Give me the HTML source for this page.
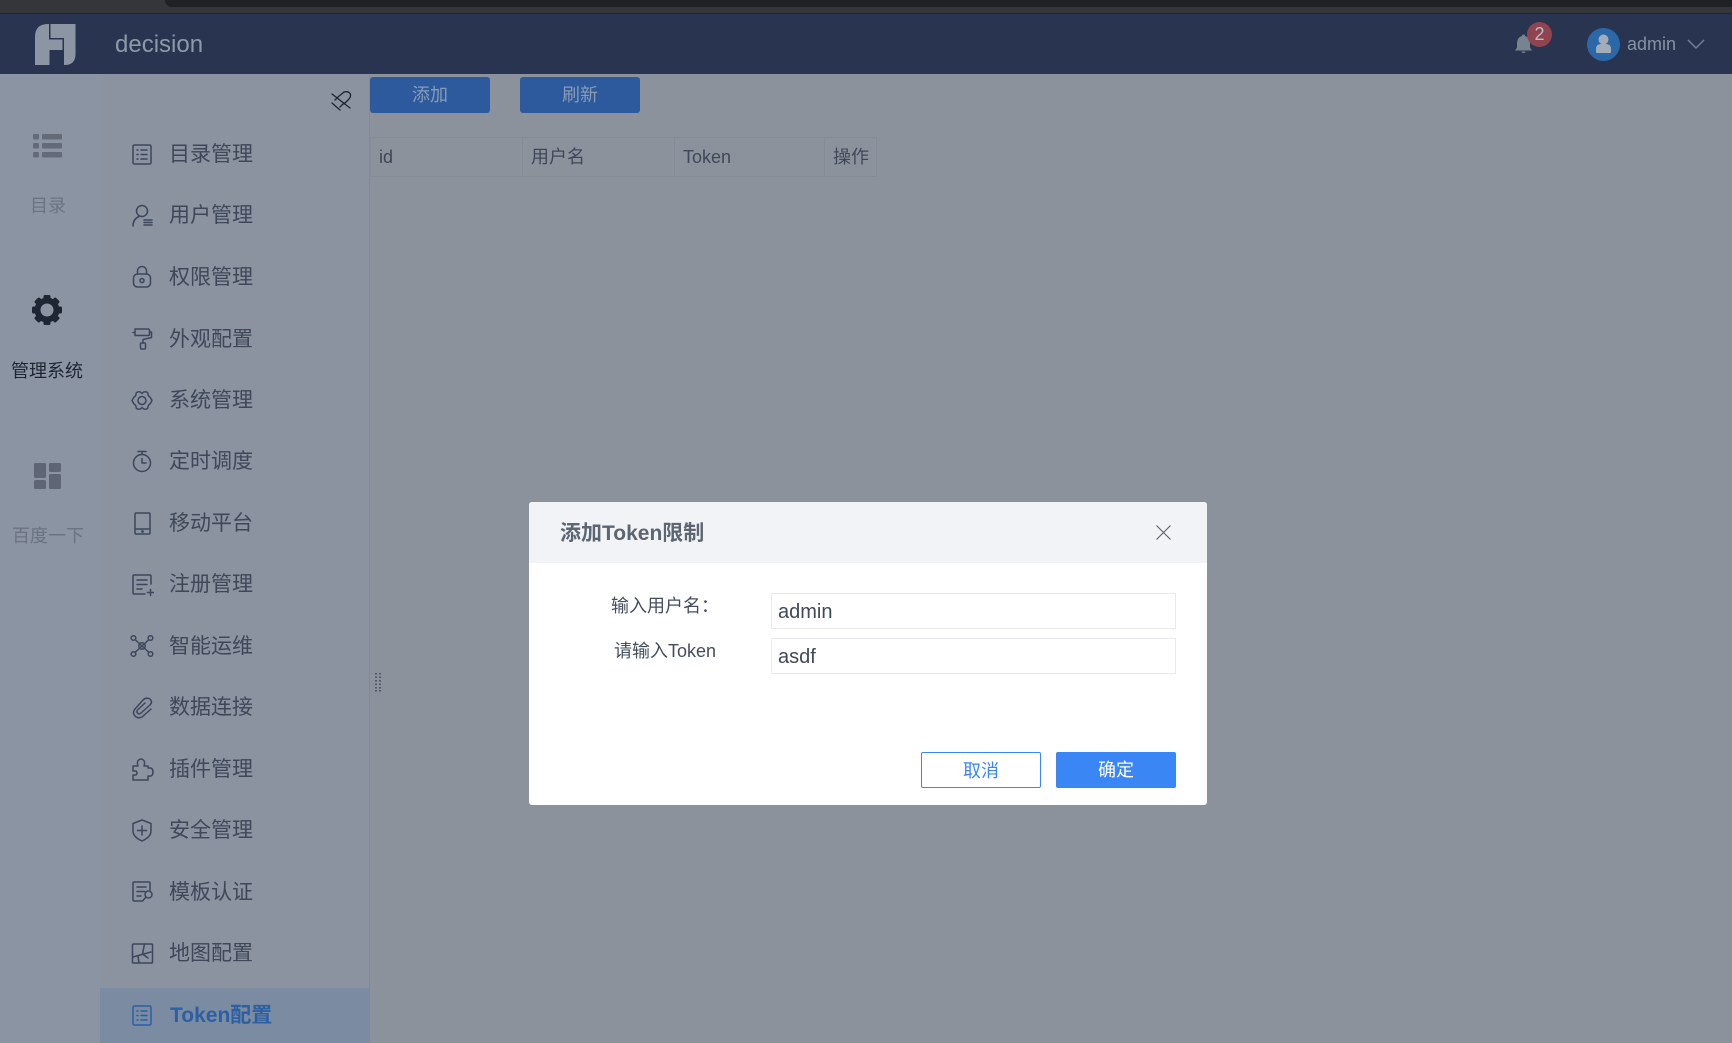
<!DOCTYPE html>
<html lang="zh">
<head>
<meta charset="utf-8">
<title>decision</title>
<style>
html,body{margin:0;padding:0;width:1732px;height:1043px;overflow:hidden;background:#8c929c}
body{position:relative;font-family:"Liberation Sans","Noto Sans CJK SC",sans-serif;}
.a{position:absolute;white-space:nowrap}
.nav{position:absolute;left:169px;font-size:21px;line-height:30px;color:#3e4859;white-space:nowrap}
.ic{position:absolute;left:130px;width:24px;height:26px;fill:none;stroke:#3c475c;stroke-width:1.5;stroke-linecap:round;stroke-linejoin:round}
.th{position:absolute;top:138px;height:38px;line-height:38px;font-size:18px;color:#3f4859;white-space:nowrap}
.vl{position:absolute;top:137px;width:1px;height:40px;background:#858c97}
</style>
</head>
<body>
<!-- browser strip -->
<div class="a" style="left:0;top:0;width:1732px;height:14px;background:#35363a"></div>
<div class="a" style="left:165px;top:0;width:1567px;height:7px;background:#202124;border-bottom-left-radius:7px"></div>
<div class="a" style="left:0;top:13px;width:1732px;height:1px;background:#222"></div>
<!-- header -->
<div class="a" style="left:0;top:14px;width:1732px;height:60px;background:#293550"></div>
<svg class="a" style="left:0;top:0" width="90" height="74"><path fill="#8c95a3" d="M35 65V37Q35 24 48 24H49V39.500H62.500V50H49.500V65ZM50.500 24H75.500V54Q75.500 65 64.500 65H64V38H50.500Z"/></svg>
<div class="a" style="left:115px;top:31px;font-size:24px;line-height:28px;color:#8c99a9">decision</div>
<svg class="a" style="left:1512px;top:32px" width="24" height="24"><path fill="#79828f" d="M10 4a1.500 1.500 0 0 1 3 0c3.500 1 5 4 5 7.500v4l2 3H3l2-3v-4c0-3.500 1.500-6.500 5-7.500zM9.500 19.500h4a2 1.500 0 0 1-4 0z"/></svg>
<div class="a" style="left:1527px;top:22px;width:25px;height:25px;border-radius:50%;background:#8f4450;color:#b9bec6;font-size:18px;line-height:25px;text-align:center">2</div>
<div class="a" style="left:1587px;top:28px;width:33px;height:33px;border-radius:50%;background:#2c68a8"></div>
<svg class="a" style="left:1587px;top:28px" width="33" height="33"><circle cx="16.500" cy="11.500" r="5" fill="#a3adb9"/><path fill="#a3adb9" d="M9 24v-3q0-5 5-5h5q5 0 5 5v3q0 1-1 1H10q-1 0-1-1z"/></svg>
<div class="a" style="left:1627px;top:33px;font-size:18px;line-height:22px;color:#8592a3">admin</div>
<svg class="a" style="left:1686px;top:37px" width="20" height="14"><path d="M2 3l8 8 8-8" fill="none" stroke="#758297" stroke-width="1.400"/></svg>

<!-- rail -->
<div class="a" style="left:0;top:74px;width:100px;height:969px;background:#8a94a3"></div>
<svg class="a" style="left:32px;top:132px" width="32" height="28" fill="#636b79"><rect x="1" y="2" width="6" height="5.500" rx="1"/><rect x="10" y="2" width="20" height="5.500" rx="1"/><rect x="1" y="11" width="6" height="5.500" rx="1"/><rect x="10" y="11" width="20" height="5.500" rx="1"/><rect x="1" y="20" width="6" height="5.500" rx="1"/><rect x="10" y="20" width="20" height="5.500" rx="1"/></svg>
<div class="a" style="left:0;width:96px;text-align:center;top:194px;font-size:18px;line-height:24px;color:#6b7382">目录</div>
<svg class="a" style="left:31px;top:294px" width="32" height="32" viewBox="0 0 32 32"><g fill="#1f2633"><circle cx="16" cy="16" r="12.500"/><rect x="12.500" y="1" width="7" height="30" rx="1.500"/><rect x="12.500" y="1" width="7" height="30" rx="1.500" transform="rotate(45 16 16)"/><rect x="12.500" y="1" width="7" height="30" rx="1.500" transform="rotate(90 16 16)"/><rect x="12.500" y="1" width="7" height="30" rx="1.500" transform="rotate(135 16 16)"/></g><circle cx="16" cy="16" r="6.500" fill="#8a94a3"/></svg>
<div class="a" style="left:-1px;width:96px;text-align:center;top:359px;font-size:18px;line-height:24px;color:#1f2633">管理系统</div>
<svg class="a" style="left:33px;top:462px" width="30" height="28" fill="#5e6675"><rect x="1" y="1" width="12" height="15" rx="1.500"/><rect x="16" y="1" width="12" height="9" rx="1.500"/><rect x="1" y="18" width="12" height="9" rx="1.500"/><rect x="16" y="12" width="12" height="15" rx="1.500"/></svg>
<div class="a" style="left:0;width:96px;text-align:center;top:524px;font-size:18px;line-height:24px;color:#6b7382">百度一下</div>

<!-- nav column -->
<div class="a" style="left:100px;top:74px;width:269px;height:969px;background:#8b92a0"></div>
<div class="a" style="left:369px;top:74px;width:1px;height:969px;background:#838a97"></div>
<div class="a" style="left:100px;top:988px;width:269px;height:55px;background:#7a8ba2"></div>
<svg class="a" style="left:328px;top:89px;fill:none;stroke:#1f2633;stroke-width:1.300;stroke-linejoin:round;stroke-linecap:round" width="24" height="24"><path d="M10 8L16 3Q20 2 22 4.500Q23.500 7 21 10L16 15M4 14L12 21M7 11L10 8M12 18L16 14M4 5L22 19"/></svg>

<svg class="ic" style="top:142px"><rect x="3" y="3" width="18" height="19" rx="1.500"/><path d="M7 8h1M11 8h6M7 12.500h1M11 12.500h6M7 17h1M11 17h6"/></svg>
<div class="nav" style="top:140px">目录管理</div>
<svg class="ic" style="top:202px"><circle cx="12" cy="9" r="5.500"/><path d="M3 24q0-7 6-9.500M14 18h8M14 20.500h8M14 23h8"/></svg>
<div class="nav" style="top:201px">用户管理</div>
<svg class="ic" style="top:264px"><rect x="3.500" y="10" width="17" height="13" rx="4"/><path d="M7.500 10V7a4.500 4.500 0 0 1 9 0v3"/><circle cx="12" cy="16.500" r="2"/></svg>
<div class="nav" style="top:263px">权限管理</div>
<svg class="ic" style="top:326px"><path d="M5 3h13q1.500 0 1.500 1.500V8q0 1.500-1.500 1.500H5M3 6.500h2M5 3v6.500M19.500 6h2v5.500L13 13.500v3.500"/><rect x="10.500" y="17" width="5" height="6" rx="1"/></svg>
<div class="nav" style="top:325px">外观配置</div>
<svg class="ic" style="top:388px"><path d="M2 12.500L4 9Q6 8 6 6L6.500 4.500Q9 3 11 4.500L12 5.500L13 4.500Q15 3 17.500 4.500L18 6Q18 8 20 9L22 12.500L20 16Q18 17 18 19L17.500 20.500Q15 22 13 20.500L12 19.500L11 20.500Q9 22 6.500 20.500L6 19Q6 17 4 16Z"/><circle cx="12" cy="12.500" r="4"/></svg>
<div class="nav" style="top:386px">系统管理</div>
<svg class="ic" style="top:449px"><circle cx="12" cy="14" r="8.500"/><path d="M8 2.500h8M12 2.500v3M12 9.500V14h4"/></svg>
<div class="nav" style="top:447px">定时调度</div>
<svg class="ic" style="top:511px"><rect x="5" y="2" width="15" height="21" rx="1"/><path d="M5 18h15"/><circle cx="12.500" cy="20.500" r=".6"/></svg>
<div class="nav" style="top:509px">移动平台</div>
<svg class="ic" style="top:572px"><path d="M21 12V4q0-1-1-1H4Q3 3 3 4v17q0 1 1 1h11M7 8h10M7 12.500h10M7 17h5M17.500 20.500h6M20.500 17.500v6"/></svg>
<div class="nav" style="top:570px">注册管理</div>
<svg class="ic" style="top:634px"><circle cx="3.500" cy="4" r="2.300"/><circle cx="20.500" cy="4" r="2.300"/><circle cx="3.500" cy="20" r="2.300"/><circle cx="20.500" cy="20" r="2.300"/><path d="M5.500 6L18.500 18M18.500 6L5.500 18"/><circle cx="12" cy="12" r="3.200"/></svg>
<div class="nav" style="top:632px">智能运维</div>
<svg class="ic" style="top:695px"><path d="M20 4Q16 2 13 5L5 14Q2 18 5 21Q8 24 12 22L21 14M20 4Q23 7 20 10L11 18Q9 20 7.500 18Q6 16.500 8 14.500L15 8"/></svg>
<div class="nav" style="top:693px">数据连接</div>
<svg class="ic" style="top:757px"><path d="M3 9H8Q6 3 11 2Q16 3 14 9H18V11Q23 10 23 15Q23 20 18 19V23H3V18H6Q8 16 6 14H3Z"/></svg>
<div class="nav" style="top:755px">插件管理</div>
<svg class="ic" style="top:818px"><path d="M12 2l9 3.500V13q0 6-9 10-9-4-9-10V5.500zM12 8v9M7.500 12.500h9"/></svg>
<div class="nav" style="top:816px">安全管理</div>
<svg class="ic" style="top:879px"><path d="M20 11V4q0-1-1-1H4Q3 3 3 4v17q0 1 1 1h8M7 8h9M7 12.500h8M7 17h4"/><circle cx="18.500" cy="15.500" r="3.500"/><path d="M16 18l-3.500 4"/></svg>
<div class="nav" style="top:878px">模板认证</div>
<svg class="ic" style="top:941px"><rect x="2.500" y="3" width="20" height="19" rx="1"/><path d="M3 16L21 11M14.500 3L12.500 13L18 17M8 15L9 22"/></svg>
<div class="nav" style="top:939px">地图配置</div>
<svg class="ic" style="top:1003px;stroke:#2d60a3"><rect x="3" y="3" width="18" height="19" rx="1.500"/><path d="M7 8h1M11 8h6M7 12.500h1M11 12.500h6M7 17h1M11 17h6"/></svg>
<div class="nav" style="top:1001px;left:170px;font-weight:700;color:#2d60a3">Token配置</div>

<!-- content -->
<div class="a" style="left:370px;top:77px;width:120px;height:36px;background:#2c5a9c;border-radius:3px;color:#8a9bb5;font-size:18px;line-height:37px;text-align:center">添加</div>
<div class="a" style="left:520px;top:77px;width:120px;height:36px;background:#2c5a9c;border-radius:3px;color:#8a9bb5;font-size:18px;line-height:37px;text-align:center">刷新</div>
<div class="a" style="left:370px;top:137px;width:505px;height:38px;border:1px solid #858c97"></div>
<div class="vl" style="left:522px"></div><div class="vl" style="left:674px"></div><div class="vl" style="left:824px"></div>
<div class="th" style="left:379px">id</div>
<div class="th" style="left:531px">用户名</div>
<div class="th" style="left:683px">Token</div>
<div class="th" style="left:833px">操作</div>
<svg class="a" style="left:374px;top:672px" width="8" height="20" fill="#4f5868"><rect x="1" y="1" width="2" height="1.500"/><rect x="5" y="1" width="2" height="1.500"/><rect x="1" y="4.500" width="2" height="1.500"/><rect x="5" y="4.500" width="2" height="1.500"/><rect x="1" y="8" width="2" height="1.500"/><rect x="5" y="8" width="2" height="1.500"/><rect x="1" y="11.500" width="2" height="1.500"/><rect x="5" y="11.500" width="2" height="1.500"/><rect x="1" y="15" width="2" height="1.500"/><rect x="5" y="15" width="2" height="1.500"/><rect x="1" y="18" width="2" height="1.500"/><rect x="5" y="18" width="2" height="1.500"/></svg>

<!-- dialog -->
<div class="a" style="left:529px;top:502px;width:678px;height:303px;background:#fff;border-radius:3px;overflow:hidden">
  <div class="a" style="left:0;top:0;width:678px;height:61px;background:#f2f3f7"></div>
</div>
<div class="a" style="left:560px;top:519px;font-size:21px;line-height:29px;font-weight:700;color:#5c6672">添加Token限制</div>
<svg class="a" style="left:1154px;top:523px" width="19" height="19"><path d="M2.500 2.500l14 14M16.500 2.500l-14 14" stroke="#5c6672" stroke-width="1.200" fill="none"/></svg>
<div class="a" style="left:611px;top:594px;font-size:18px;line-height:24px;color:#454d5c">输入用户名：</div>
<div class="a" style="left:614px;top:639px;font-size:18px;line-height:24px;color:#454d5c">请输入Token</div>
<div class="a" style="left:771px;top:593px;width:397px;height:34px;border:1px solid #e8eaee;font-size:20px;line-height:36px;padding-left:6px;color:#3f4859">admin</div>
<div class="a" style="left:771px;top:638px;width:397px;height:34px;border:1px solid #e8eaee;font-size:20px;line-height:36px;padding-left:6px;color:#3f4859">asdf</div>
<div class="a" style="left:921px;top:752px;width:118px;height:34px;border:1px solid #3a86f5;border-radius:2px;color:#3a86f5;font-size:18px;line-height:36px;text-align:center;background:#fff">取消</div>
<div class="a" style="left:1056px;top:752px;width:120px;height:36px;background:#3a86f5;border-radius:2px;color:#fff;font-size:18px;line-height:37px;text-align:center">确定</div>
</body>
</html>
